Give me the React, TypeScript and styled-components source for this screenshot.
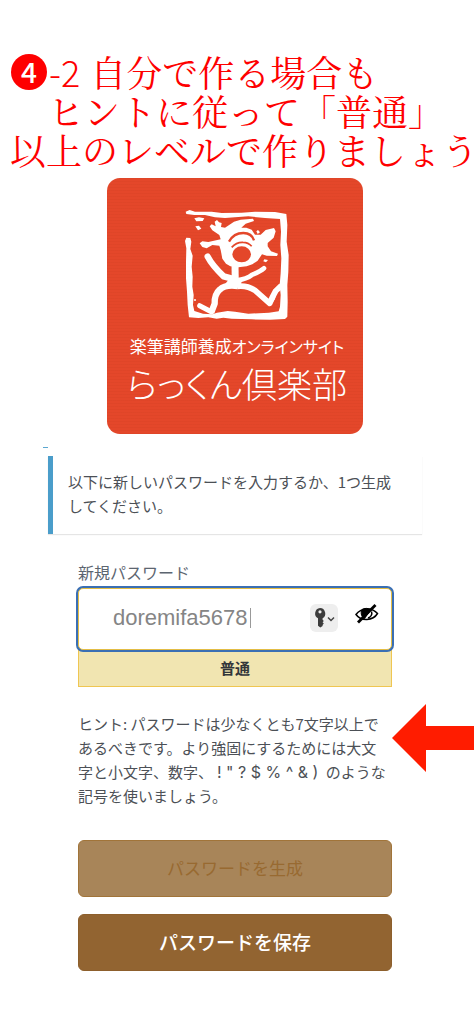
import React, { useState } from "react";
import styled, { createGlobalStyle, css } from "styled-components";

const GlobalStyle = createGlobalStyle`
  *, *::before, *::after { box-sizing: border-box; }
  body {
    margin: 0;
    background: #fff;
    color: #4c5056;
    font-family: "Noto Sans CJK JP", sans-serif;
    font-size: 15px;
    line-height: 24px;
    overflow-x: hidden;
  }
`;

const Page = styled.main`
  display: flex;
  flex-direction: column;
  padding: 52px 0 48px;
`;

const Headline = styled.h1`
  margin: 0;
  padding-left: 10px;
  color: #fe0000;
  font-family: "Noto Serif CJK JP", "Noto Sans CJK JP", serif;
  font-size: 36px;
  font-weight: 400;
  line-height: 39px;
  white-space: nowrap;
`;

const HeadlineRow = styled.span<{ $indent?: boolean }>`
  display: flex;
  align-items: center;
  padding-left: ${(p) => (p.$indent ? "38px" : "0")};
`;

const StepBadge = styled.span`
  display: inline-flex;
  align-items: center;
  justify-content: center;
  width: 36px;
  height: 36px;
  margin-left: 1px;
  background: #fe0000;
  border-radius: 50%;
  color: #fff;
  font-family: "Noto Sans CJK JP", sans-serif;
  font-size: 28px;
  font-weight: 500;
`;

const StepNumber = styled.span`
  margin: 0 10px 0 2px;
  font-family: "Noto Sans CJK JP", sans-serif;
  font-weight: 300;
`;

const Column = styled.div`
  display: flex;
  flex-direction: column;
  padding: 0 52px 0 48px;
`;

const LogoCard = styled.section`
  display: flex;
  flex-direction: column;
  align-items: center;
  align-self: center;
  width: 256px;
  max-width: 100%;
  height: 256px;
  margin-top: 9px;
  padding: 31px 0 0 4px;
  border-radius: 13px;
  background:
    repeating-linear-gradient(180deg, rgba(150, 40, 10, 0.06) 0 1px, transparent 1px 3px),
    #e4472a;
  color: #fff;
  white-space: nowrap;
  font-feature-settings: "palt";
`;

const Stamp = styled.svg`
  display: block;
  width: 105px;
  height: 113px;
`;

const LogoCaption = styled.span`
  margin-top: 11px;
  font-size: 17px;
  line-height: 26px;
`;

const LogoKana = styled.span`
  font-size: 16px;
`;

const LogoName = styled.span`
  font-size: 35px;
  font-weight: 300;
  line-height: 48px;
`;

const SkipLink = styled.a`
  display: block;
  width: 5px;
  height: 1px;
  margin: 13px 0 8px -5px;
  background: #5ba7d0;
`;

const Notice = styled.p`
  margin: 0;
  padding: 14px 24px 16px 15px;
  border-left: 5px solid #4a9dca;
  box-shadow: 0 1px 1px rgba(0, 0, 0, 0.1);
`;

const Form = styled.form`
  display: flex;
  flex-direction: column;
  padding: 26px 30px 0;
`;

const Label = styled.label`
  color: #5c6570;
  font-size: 16px;
  line-height: 24px;
`;

const Field = styled.div`
  position: relative;
  display: flex;
  align-items: center;
  height: 62px;
  margin-top: 4px;
  padding: 0 12px 2px 34px;
  border: 1px solid #e3bd45;
  border-radius: 5px;
  background: #fff;
  box-shadow: 0 0 0 2px #3a6fb4;
`;

const PasswordInput = styled.input`
  width: 137px;
  height: 32px;
  padding: 0;
  border: 0;
  outline: 0;
  background: transparent;
  color: #858585;
  caret-color: transparent;
  font-family: "Liberation Sans", Arial, sans-serif;
  font-size: 22px;
`;

const Caret = styled.span`
  width: 1px;
  height: 20px;
  background: #999;
`;

const FieldActions = styled.div`
  display: flex;
  align-items: center;
  gap: 17px;
  margin-left: auto;
`;

const iconReset = css`
  display: flex;
  align-items: center;
  justify-content: center;
  padding: 0;
  border: 0;
`;

const KeyButton = styled.button`
  ${iconReset}
  width: 28px;
  height: 28px;
  border-radius: 6px;
  background: #eee;
`;

const EyeButton = styled.button`
  ${iconReset}
  width: 24px;
  height: 28px;
  background: transparent;
`;

const EyeIcon = styled.svg`
  width: 24px;
  height: 20px;
  margin-bottom: 8px;
`;

const Strength = styled.div`
  height: 37px;
  border: 1px solid #efc652;
  background: #f1e5b1;
  color: #33363a;
  font-weight: 700;
  line-height: 34px;
  text-align: center;
`;

const HintArea = styled.div`
  position: relative;
  margin-top: 25px;
`;

const Hint = styled.p`
  margin: 0;
  padding-right: 4px;
`;

const Symbols = styled.span`
  padding: 0 4px;
  font-family: Inter, sans-serif;
  font-size: 16px;
`;

const PointerArrow = styled.svg`
  position: absolute;
  top: -8px;
  left: 100%;
  width: 82px;
  height: 68px;
`;

const Button = styled.button<{ $muted?: boolean }>`
  height: 57px;
  padding: 0 0 3px;
  border: 1px solid ${(p) => (p.$muted ? "#a17439" : "#8d5f2c")};
  border-radius: 6px;
  background: ${(p) => (p.$muted ? "#a88559" : "#926431")};
  color: ${(p) => (p.$muted ? "#986a31" : "#fff")};
  font-family: inherit;
  font-size: ${(p) => (p.$muted ? "17px" : "19px")};
  font-weight: ${(p) => (p.$muted ? 400 : 500)};
`;

const Actions = styled.div`
  display: flex;
  flex-direction: column;
  gap: 17px;
  margin-top: 32px;
`;

function StampMark() {
  return (
    <Stamp viewBox="30 42 315 339" fill="#fff" aria-hidden="true">
      <path d="M32 50 44 45 60 50 110 50 140 54 200 53 240 50 300 51 334 57 337 90 335 140 341 180 340 230 337 270 338 320 337 365 330 372 285 374 230 373 170 371 145 368 125 371 100 367 70 369 42 367 38 330 36 290 33 250 33 200 34 160 30 138 34 128 46 129 49 140 46 162 53 182 50 215 53 245 52 275 56 300 54 330 58 348 84 356 112 358 126 353 158 348 180 350 220 356 282 353 311 349 315 335 317 300 314 270 317 235 319 190 316 150 318 110 315 72 270 69 220 64 150 69 120 67 90 60 58 60 34 57Z" />
      <path d="M150 98 177 80 197 74 234 71 237 78 212 86 199 98 214 98 230 104 240 119 257 119 272 105 297 99 302 109 296 128 278 144 278 154 288 169 309 176 306 183 275 182 261 178 248 197 232 208 215 214 190 217 166 214 153 206 142 191 137 165 133 152 112 150 95 160 82 156 74 145 82 139 100 141 137 133 133 120 112 106 104 94 110 88 122 94 119 80 126 75 132 82 140 84 138 96Z" />
      <g fill="none" stroke="#fff" strokeLinejoin="round">
        <path d="M180 208 181 270" strokeWidth="21" />
        <path d="M98 185Q112 212 146 244L180 253" strokeWidth="19" strokeLinecap="round" />
        <path d="M267 220Q256 230 232 239Q215 253 184 256" strokeWidth="14" strokeLinecap="round" />
        <path d="M188 273Q150 268 134 284Q118 298 119 326L109 352" strokeWidth="19" />
        <path d="M186 274Q216 270 240 286L284 325Q292 306 302 288L319 272" strokeWidth="17" />
        <path d="M74 332 110 351" strokeWidth="15" strokeLinecap="round" />
      </g>
      <path d="M160 255 202 255 198 266 216 276 160 278 148 270Z" />
      <path d="M282 312 306 286 300 312 286 333 270 322Z" />
      <g fill="none" stroke="#e4472a" strokeWidth="7">
        <path d="M162 140Q176 114 205 114Q230 114 237 136" />
        <path d="M170 157Q184 141 204 142Q220 142 230 154" strokeWidth="5" />
      </g>
      <ellipse cx="200" cy="178" rx="28" ry="24" fill="#e4472a" />
      <path d="M58 70 72 67 88 70 83 78 64 79Z" />
      <path d="M61 94 72 92 79 101 69 106Z" />
      <path d="M244 109 249 105 255 112 248 117Z" />
      <path d="M268 193 279 195 273 202 265 199Z" />
      <circle cx="60" cy="315" r="3" />
    </Stamp>
  );
}

export default function App() {
  const [password, setPassword] = useState("doremifa5678");
  return (
    <>
      <GlobalStyle />
      <Page>
        <Headline>
          <HeadlineRow>
            <StepBadge>4</StepBadge>
            <StepNumber>-2</StepNumber>自分で作る場合も
          </HeadlineRow>
          <HeadlineRow $indent>ヒントに従って「普通」</HeadlineRow>
          <HeadlineRow>以上のレベルで作りましょう</HeadlineRow>
        </Headline>
        <Column>
          <LogoCard>
            <StampMark />
            <LogoCaption>
              楽筆講師養成<LogoKana>オンラインサイト</LogoKana>
            </LogoCaption>
            <LogoName>らっくん倶楽部</LogoName>
          </LogoCard>
          <SkipLink href="#password" aria-label="らっくん倶楽部" />
          <Notice>以下に新しいパスワードを入力するか、1つ生成してください。</Notice>
          <Form onSubmit={(e) => e.preventDefault()}>
            <Label htmlFor="password">新規パスワード</Label>
            <Field>
              <PasswordInput
                id="password"
                type="text"
                value={password}
                onChange={(e) => setPassword(e.target.value)}
              />
              <Caret />
              <FieldActions>
                <KeyButton type="button" aria-label="キー">
                  <svg width="24" height="22" viewBox="0 0 24 22" fill="none">
                    <path
                      fill="#3c3c3c"
                      fillRule="evenodd"
                      d="M8 1a5.5 5.5 0 0 1 2.6 10.2v1.6l1.2 1.2-1.2 1.3 1.2 1.3-1.2 1.3v1.2L8.3 20.5 6 18.700v-7.400A5.500 5.500 0 0 1 8 1Zm0 2.200a1.600 1.600 0 1 0 0 3.200 1.600 1.600 0 0 0 0-3.200Z"
                    />
                    <path d="m16 10.500 3 3 3-3" stroke="#444" strokeWidth="1.500" />
                  </svg>
                </KeyButton>
                <EyeButton type="button" aria-label="パスワードを隠す">
                  <EyeIcon viewBox="0 0 24 20" fill="none" stroke="#000">
                    <path d="M1 10.500C6 3.500 17 3 22.500 9.500 18 17 6 17.500 1 10.500Z" strokeWidth="1.500" />
                    <path d="M7 5.500c-2 4 0 8 2.500 9L16 5.500C13 4 9.500 4 7 5.500Z" fill="#000" />
                    <path d="M16.500 7.500c1 3-.5 5.500-3.500 6.500" strokeWidth="1.500" />
                    <path d="M3 18.500 20.500 1" strokeWidth="2.800" />
                  </EyeIcon>
                </EyeButton>
              </FieldActions>
            </Field>
            <Strength>普通</Strength>
            <HintArea>
              <Hint>
                ヒント: パスワードは少なくとも7文字以上であるべきです。より強固にするためには大文字と小文字、数字、
                <Symbols>! " ? $ % ^ &amp; )</Symbols> のような記号を使いましょう。
              </Hint>
              <PointerArrow viewBox="0 0 82 68" aria-hidden="true">
                <path fill="#ff1c00" d="M0 34 34 0v22h48v24H34v22Z" />
              </PointerArrow>
            </HintArea>
            <Actions>
              <Button type="button" $muted>
                パスワードを生成
              </Button>
              <Button type="submit">パスワードを保存</Button>
            </Actions>
          </Form>
        </Column>
      </Page>
    </>
  );
}
